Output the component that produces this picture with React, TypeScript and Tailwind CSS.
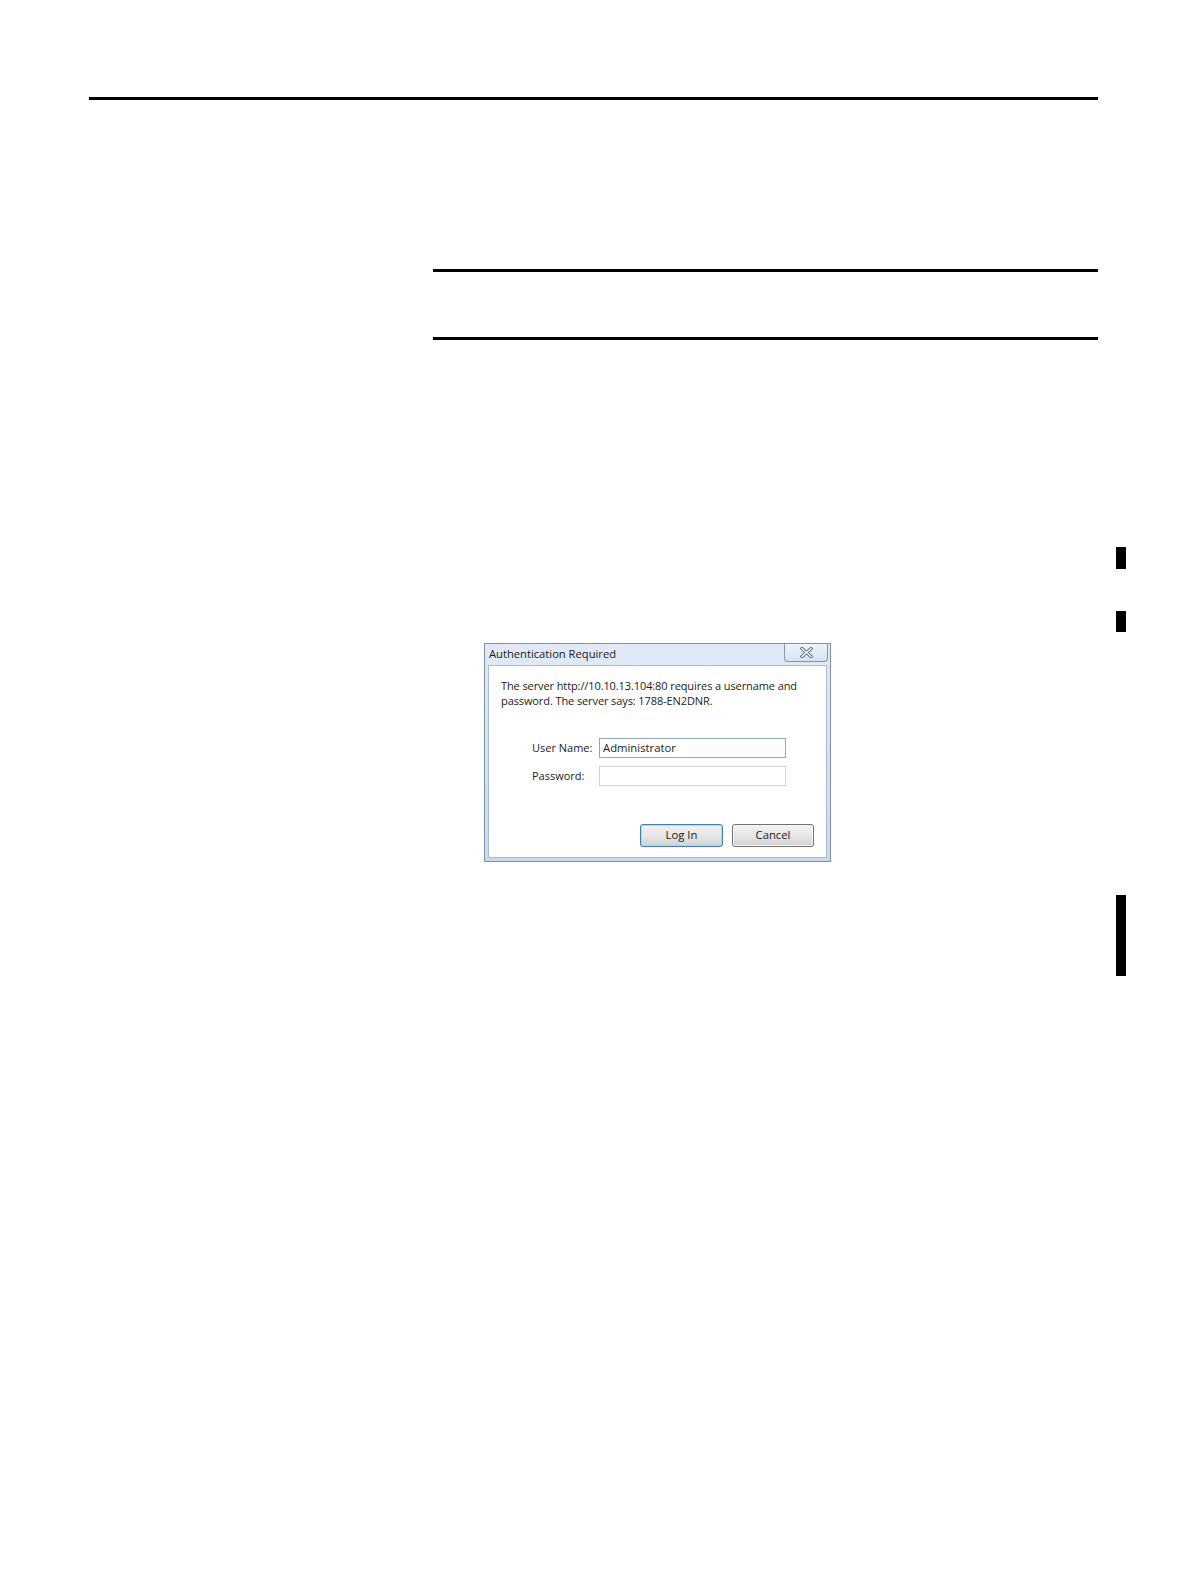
import React from 'react';

function CloseGlyph() {
  return (
    <svg width="13" height="11" viewBox="0 0 13 11">
      <path d="M2 1.5 L11 9.5 M11 1.5 L2 9.5" stroke="#5b6a80" strokeWidth="3.2" strokeLinecap="square" />
      <path d="M2 1.5 L11 9.5 M11 1.5 L2 9.5" stroke="#ffffff" strokeWidth="1.4" strokeLinecap="square" />
    </svg>
  );
}

function AuthDialog() {
  return (
    <div className="w-[347px] h-[219px] border border-[#7d8ea6] bg-gradient-to-b from-[#e1eaf6] to-[#cbdaee] flex flex-col font-['Open_Sans',sans-serif] text-[#1b1b1b]">
      {/* title bar */}
      <div className="h-[21px] flex items-start justify-between pl-[4px] pr-[2px]">
        <span className="text-[11.2px] leading-[20px] text-[#1a1a1a]">Authentication Required</span>
        <div className="w-[44px] h-[18px] border border-t-0 border-[#8795ab] rounded-b-[4px] bg-gradient-to-b from-[#eef3fa] to-[#d6e2f1] flex items-center justify-center">
          <CloseGlyph />
        </div>
      </div>

      {/* client area */}
      <div className="flex-1 mx-[3px] mb-[3px] border border-[#a5bbd8] bg-white flex flex-col">
        <p className="pl-[12px] pt-[12px] text-[11px] leading-[15px] tracking-[-0.1px]">
          The server http://10.10.13.104:80 requires a username and
          <br />
          password. The server says: 1788-EN2DNR.
        </p>

        <div className="mt-[30px] pl-[43px] flex flex-col gap-[8px] text-[11px]">
          <div className="flex items-center">
            <span className="w-[67px]">User Name:</span>
            <div className="w-[187px] h-[20px] border border-[#8fa7c4] flex items-center pl-[3px] text-[11.3px]">
              Administrator
            </div>
          </div>
          <div className="flex items-center">
            <span className="w-[67px]">Password:</span>
            <div className="w-[187px] h-[20px] border border-[#cdd3db]" />
          </div>
        </div>

        <div className="mt-[38px] pr-[12px] flex justify-end gap-[9px] text-[11.3px]">
          <div className="w-[83px] h-[23px] rounded-[3px] border border-[#3c7fb1] shadow-[inset_0_0_0_1px_#a6dcf5] bg-gradient-to-b from-[#f2f2f2] via-[#e6e6e6] to-[#d2d2d2] flex items-center justify-center">
            Log In
          </div>
          <div className="w-[82px] h-[23px] rounded-[3px] border border-[#707070] shadow-[inset_0_0_0_1px_#fafafa] bg-gradient-to-b from-[#f2f2f2] via-[#e6e6e6] to-[#d2d2d2] flex items-center justify-center">
            Cancel
          </div>
        </div>
      </div>
    </div>
  );
}

export default function App() {
  return (
    <div className="w-[1190px] h-[1584px] bg-white pt-[97px]">
      <div className="ml-[89px] w-[1009px] h-[3px] bg-black" />
      <div className="flex">
        <div className="ml-[433px] w-[665px]">
          <div className="mt-[169px] h-[3px] bg-black" />
          <div className="mt-[65px] h-[3px] bg-black" />
          <div className="mt-[303px] ml-[51px]">
            <AuthDialog />
          </div>
        </div>
        <div className="ml-[18px] w-[10px] flex flex-col">
          <div className="mt-[447px] h-[22px] bg-black" />
          <div className="mt-[42px] h-[21px] bg-black" />
          <div className="mt-[263px] h-[81px] bg-black" />
        </div>
      </div>
    </div>
  );
}
